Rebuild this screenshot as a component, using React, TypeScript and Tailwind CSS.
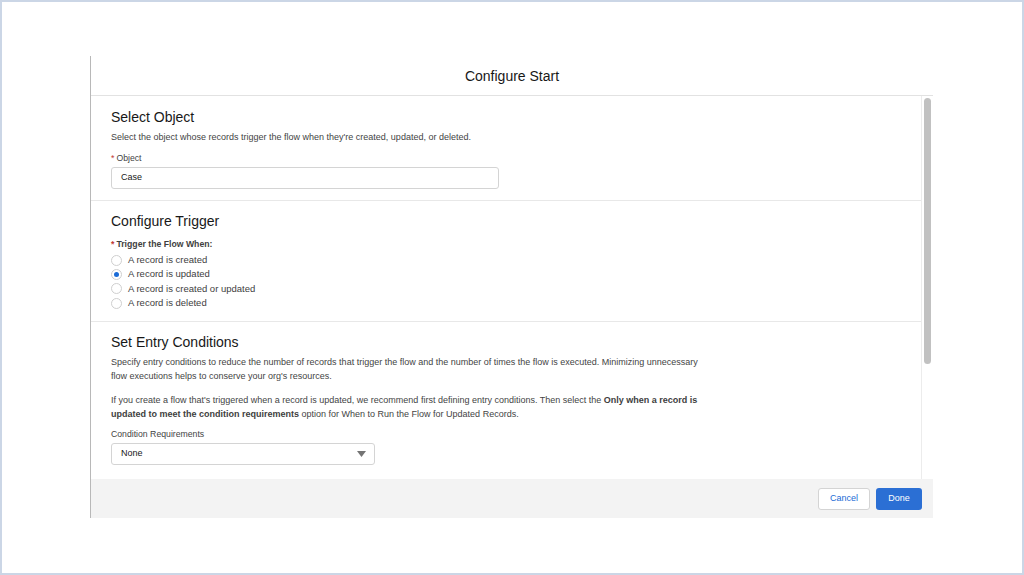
import { useState } from "react";

const triggerOptions = [
  "A record is created",
  "A record is updated",
  "A record is created or updated",
  "A record is deleted",
];

function Required() {
  return <span className="mr-[2px] text-[#c23934]">*</span>;
}

function SectionTitle({ children }: { children: React.ReactNode }) {
  return <h2 className="text-[14px] leading-[18px] text-[#181818]">{children}</h2>;
}

export default function App() {
  const [trigger, setTrigger] = useState(1);

  return (
    <div
      className="h-[575px] w-[1024px] overflow-hidden border-2 border-[#cbd6e6] bg-white pl-[88px] pt-[54px] text-[#3e3e3e]"
      style={{ fontFamily: '"Liberation Sans", Arial, sans-serif' }}
    >
      <div className="flex h-[462px] w-[843px] flex-col border-l border-[#b8b8b8]">
        {/* Header */}
        <div className="flex h-[40px] shrink-0 items-center justify-center border-b border-[#e2e2e2] pt-[2px] text-[14px] text-[#181818]">
          Configure Start
        </div>

        {/* Body */}
        <div className="flex min-h-0 flex-1">
          <div className="min-w-0 flex-1 overflow-hidden border-r border-[#ececec]">
            {/* Select Object */}
            <section className="border-b border-[#e8e8e8] pb-[11px] pl-[20px] pt-[12px]">
              <SectionTitle>Select Object</SectionTitle>
              <p className="mt-[5px] text-[9px] leading-[12px] text-[#444]">
                Select the object whose records trigger the flow when they're created, updated, or deleted.
              </p>
              <label className="mt-[9px] block text-[8.7px] leading-[12px] text-[#444]">
                <Required />
                Object
              </label>
              <div className="mt-[3px] flex h-[22px] w-[388px] items-center rounded-[3px] border border-[#d4d4d4] px-[9px] text-[9px] text-[#181818]">
                Case
              </div>
            </section>

            {/* Configure Trigger */}
            <section className="border-b border-[#e8e8e8] pb-[10px] pl-[20px] pt-[11px]">
              <SectionTitle>Configure Trigger</SectionTitle>
              <div className="mt-[8px] text-[8.7px] font-bold leading-[12px] text-[#3e3e3e]">
                <Required />
                Trigger the Flow When:
              </div>
              <div className="mt-[3px] flex flex-col">
                {triggerOptions.map((option, i) => (
                  <button
                    key={option}
                    type="button"
                    onClick={() => setTrigger(i)}
                    className="flex h-[14.4px] items-center gap-[6px] text-left text-[9.5px] text-[#3e3e3e]"
                  >
                    <span className="flex size-[11px] items-center justify-center rounded-full border border-[#cfcfcf] bg-white">
                      {trigger === i && <span className="size-[5px] rounded-full bg-[#1b6bd6]" />}
                    </span>
                    {option}
                  </button>
                ))}
              </div>
            </section>

            {/* Set Entry Conditions */}
            <section className="pl-[20px] pt-[11px]">
              <SectionTitle>Set Entry Conditions</SectionTitle>
              <p className="mt-[4px] max-w-[598px] text-[9px] leading-[14px] text-[#444]">
                Specify entry conditions to reduce the number of records that trigger the flow and the number of
                times the flow is executed. Minimizing unnecessary flow executions helps to conserve your org's
                resources.
              </p>
              <p className="mt-[10px] max-w-[598px] text-[9px] leading-[14px] text-[#444]">
                If you create a flow that's triggered when a record is updated, we recommend first defining entry
                conditions. Then select the{" "}
                <b className="text-[#3e3e3e]">Only when a record is updated to meet the condition requirements</b>{" "}
                option for When to Run the Flow for Updated Records.
              </p>
              <label className="mt-[7px] block text-[8.7px] leading-[12px] text-[#444]">Condition Requirements</label>
              <div className="mt-[3px] flex h-[22px] w-[264px] items-center justify-between rounded-[3px] border border-[#d4d4d4] pl-[9px] pr-[8px] text-[9px] text-[#181818]">
                None
                <svg width="9" height="6" viewBox="0 0 9 6">
                  <path d="M0 0h9L4.5 6z" fill="#747474" />
                </svg>
              </div>
            </section>
          </div>

          {/* Scrollbar */}
          <div className="w-[11px] shrink-0 px-[2px] pt-[2px]">
            <div className="h-[266px] w-[7px] rounded-full bg-[#c1c1c1]" />
          </div>
        </div>

        {/* Footer */}
        <div className="flex h-[39px] shrink-0 items-center justify-end gap-[6px] bg-[#f3f3f3] pr-[11px]">
          <button
            type="button"
            className="h-[22px] w-[52px] rounded-[3px] border border-[#d4d4d4] bg-white text-[9px] text-[#1b6bd6]"
          >
            Cancel
          </button>
          <button
            type="button"
            className="h-[22px] w-[46px] rounded-[3px] bg-[#2b6fd4] text-[9px] text-white"
          >
            Done
          </button>
        </div>
      </div>
    </div>
  );
}
